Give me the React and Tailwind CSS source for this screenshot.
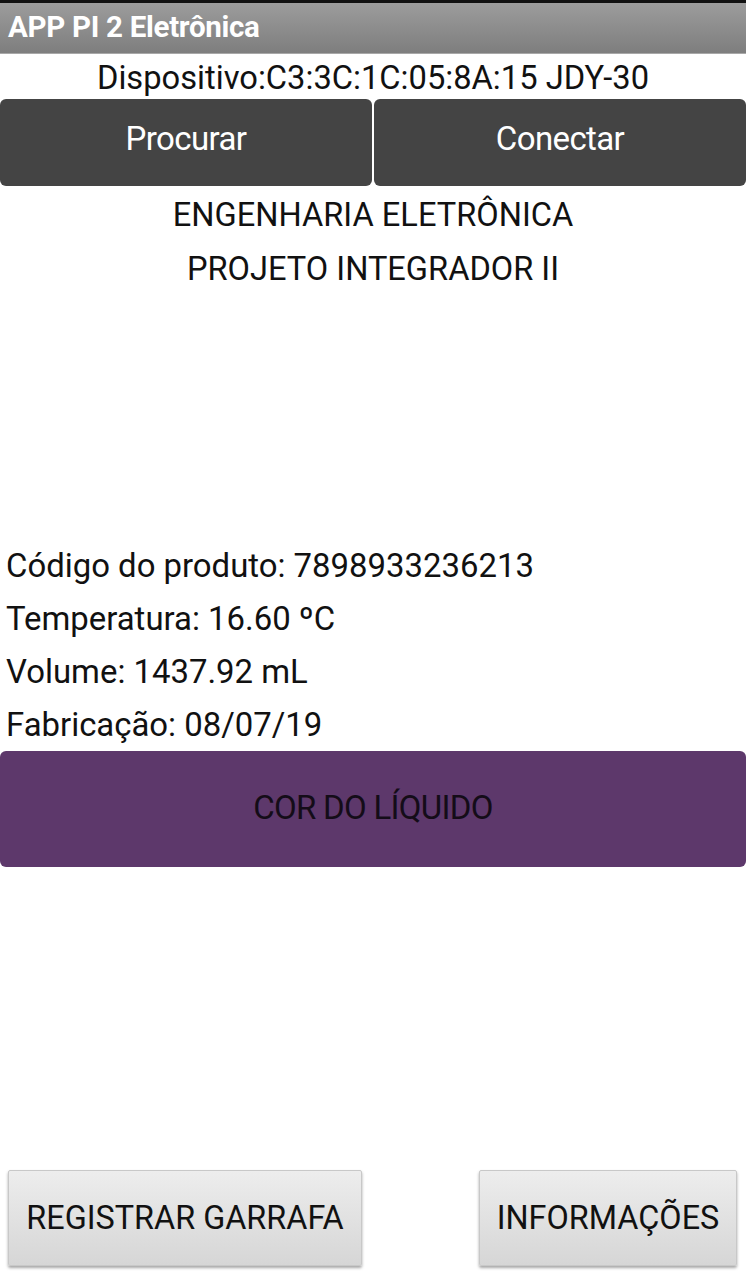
export default function App() {
    const font = { fontFamily: 'Roboto, "Noto Sans", sans-serif' };

    return (
        <div className="w-[746px] h-[1280px] bg-white overflow-hidden flex flex-col" style={font}>
            {/* status strip */}
            <div className="h-[3px] bg-[#111]" />

            {/* title bar */}
            <div className="h-[51px] flex items-center px-[8px] bg-gradient-to-b from-[#9c9c9c] to-[#7e7e7e] border-b border-[#a8a8a8]">
                <span className="text-white font-bold text-[29.5px] tracking-[-0.3px] leading-none">APP PI 2 Eletrônica</span>
            </div>

            <p className="h-[45px] pt-[4px] flex items-center justify-center text-[32.7px] text-[#111] leading-none">
                Dispositivo:C3:3C:1C:05:8A:15 JDY-30
            </p>

            <div className="h-[87px] flex gap-[2px]">
                <button className="flex-1 pb-[8px] rounded-[6px] bg-[#444444] text-white text-[33px] tracking-[-0.6px]">Procurar</button>
                <button className="flex-1 pb-[8px] rounded-[6px] bg-[#444444] text-white text-[33px] tracking-[-0.6px]">Conectar</button>
            </div>

            <div className="pt-[2px] text-center text-[32.6px] leading-[54px] text-[#111]">
                <p>ENGENHARIA ELETRÔNICA</p>
                <p>PROJETO INTEGRADOR II</p>
            </div>

            <div className="mt-[243px] px-[6px] text-[32.9px] leading-[53px] text-[#111]">
                <p>Código do produto: 7898933236213</p>
                <p>Temperatura: 16.60 ºC</p>
                <p>Volume: 1437.92 mL</p>
                <p>Fabricação: 08/07/19</p>
            </div>

            <button className="h-[116px] pb-[3px] rounded-[6px] bg-[#5d386b] text-[#140c18] text-[33px] tracking-[-0.7px]">
                COR DO LÍQUIDO
            </button>

            <div className="mt-[303px] flex justify-between pl-[8px] pr-[9px]">
                <button className="w-[354px] h-[96px] rounded-[2px] border border-[#c8c8c8] bg-gradient-to-b from-[#ededed] to-[#d6d6d6] shadow-[0_2px_3px_rgba(0,0,0,0.35)] text-[32.4px] text-[#111]">
                    REGISTRAR GARRAFA
                </button>
                <button className="w-[258px] h-[96px] rounded-[2px] border border-[#c8c8c8] bg-gradient-to-b from-[#ededed] to-[#d6d6d6] shadow-[0_2px_3px_rgba(0,0,0,0.35)] text-[32.4px] text-[#111]">
                    INFORMAÇÕES
                </button>
            </div>
        </div>
    );
}
